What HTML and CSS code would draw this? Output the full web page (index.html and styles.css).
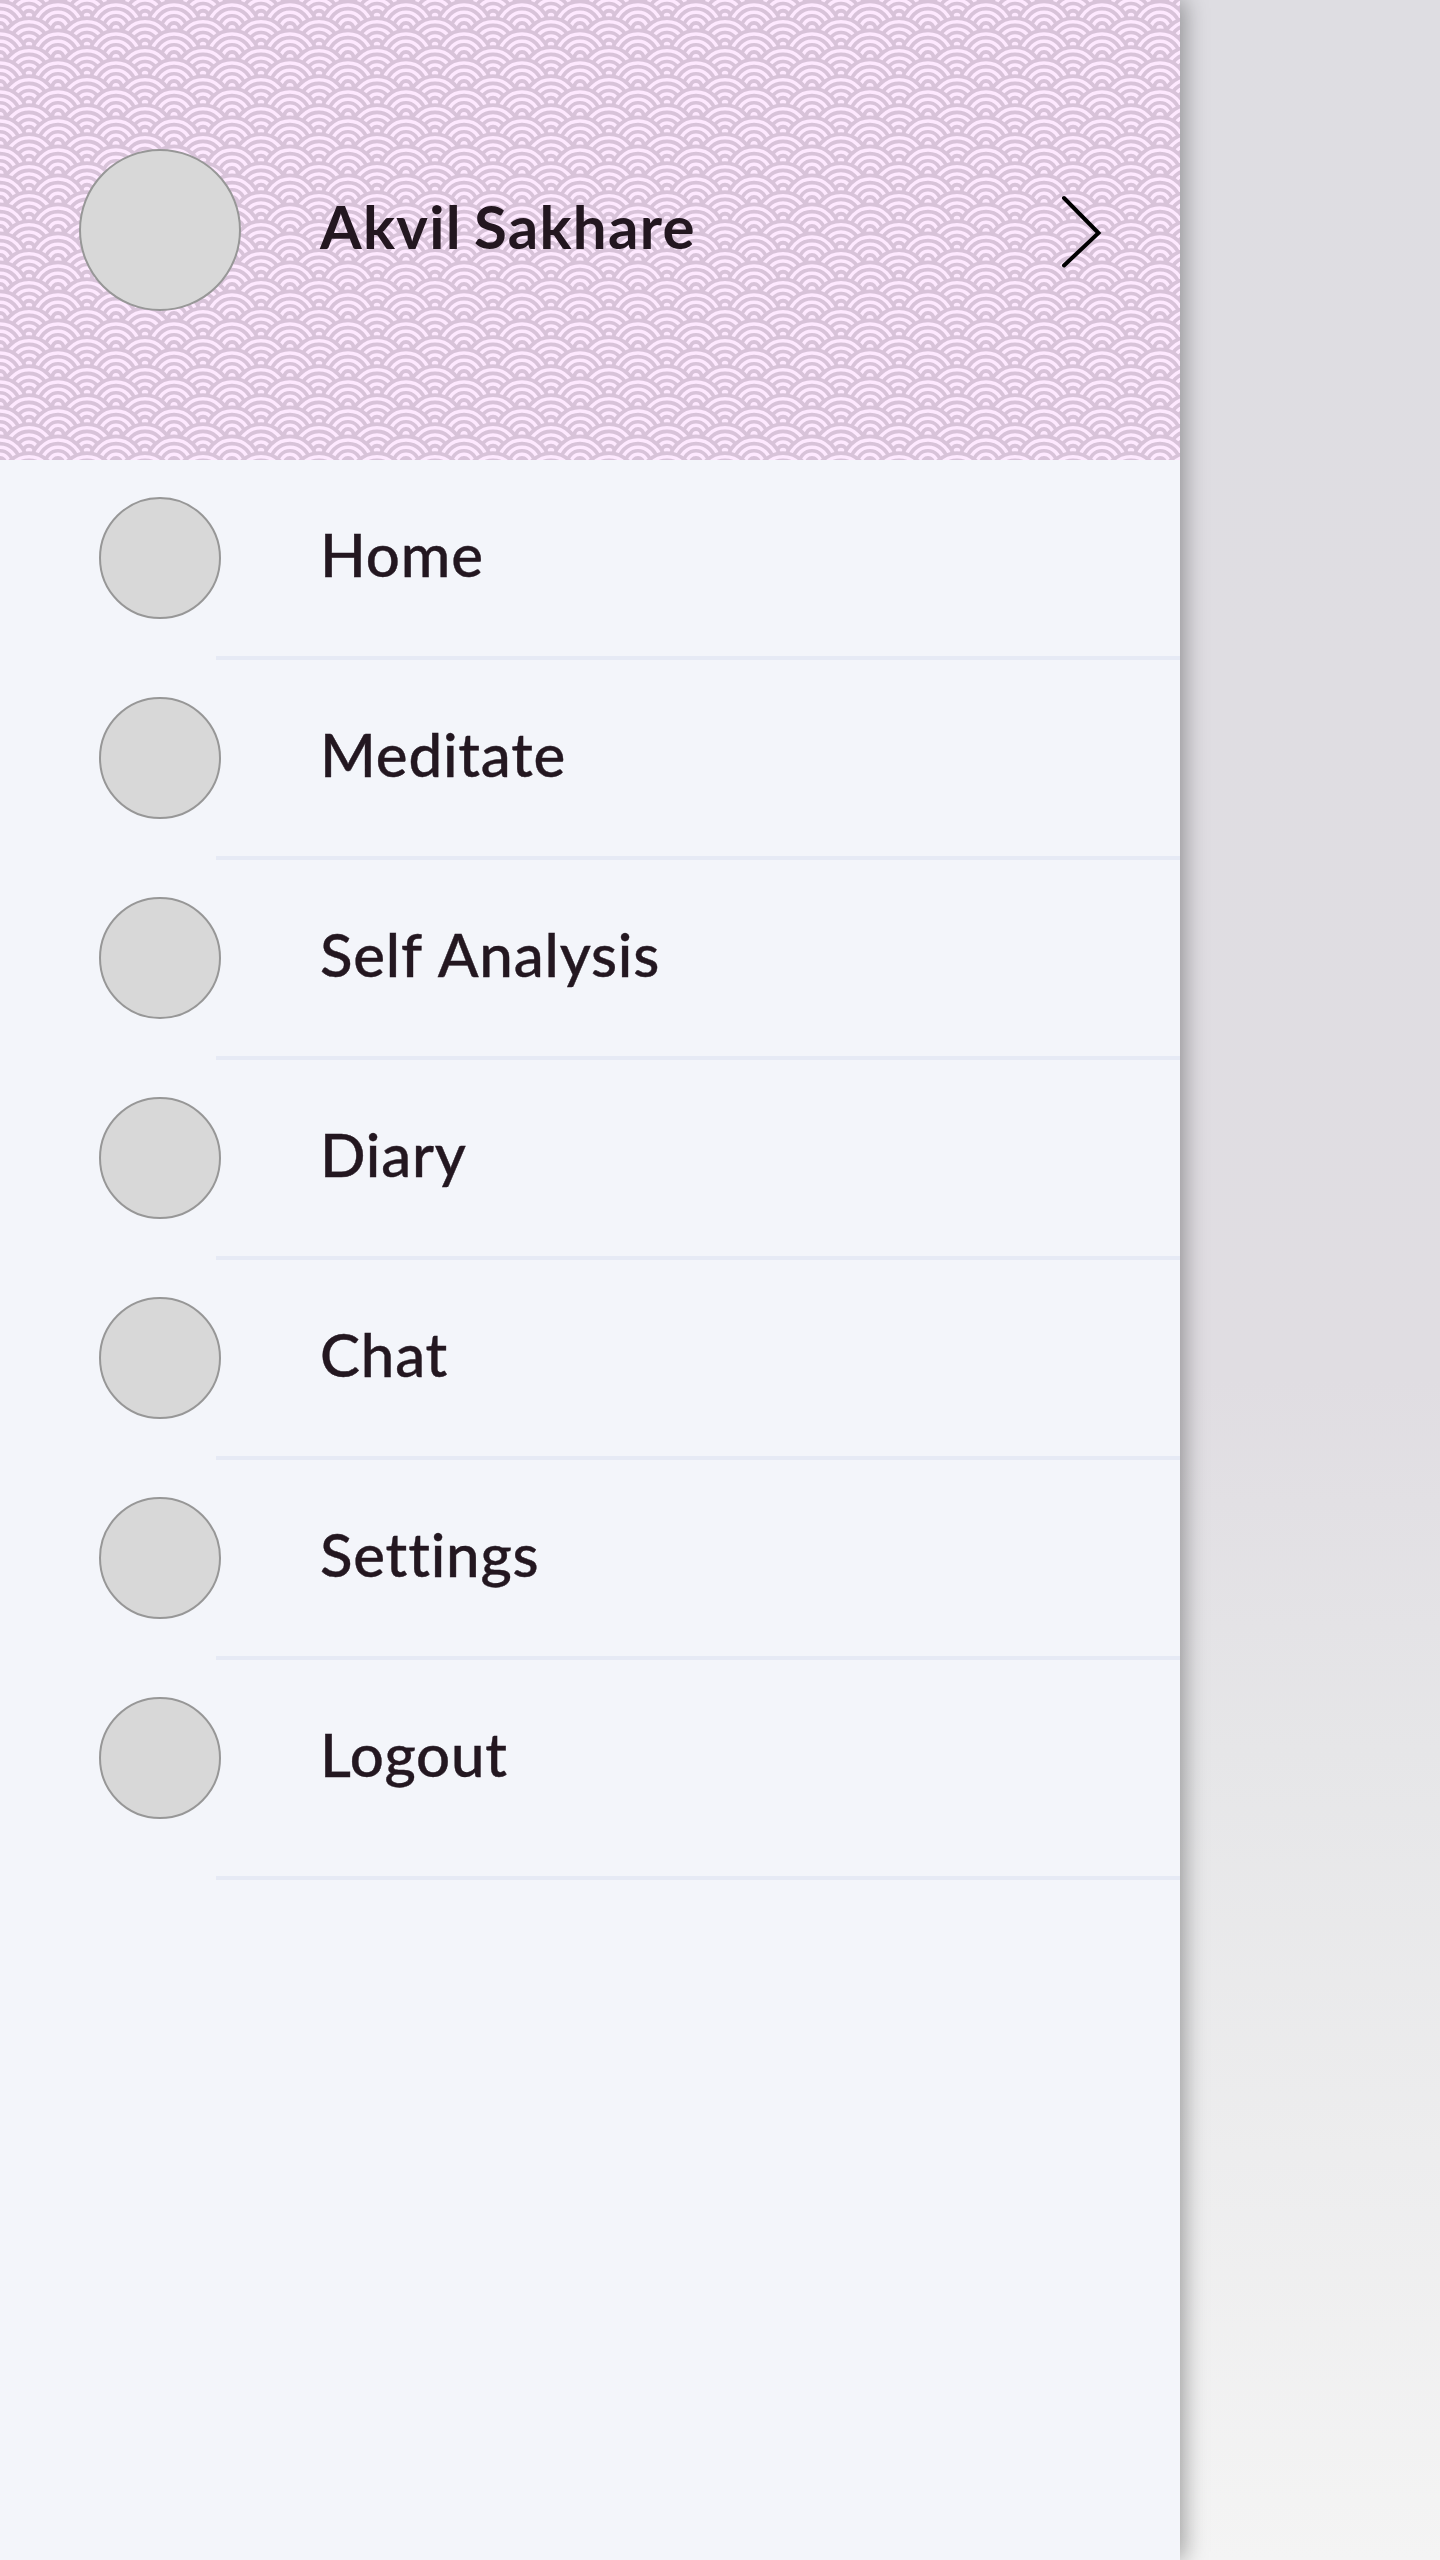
FILE: index.html
```html
<!DOCTYPE html>
<html lang="en">
<head>
<meta charset="utf-8">
<title>Menu</title>
<link rel="stylesheet" href="styles.css">
</head>
<body>
<aside class="drawer">
  <header class="profile">
    <svg class="waves" width="1180" height="460" aria-hidden="true">
      <defs>
        <g id="scale">
          <circle r="29" fill="#d8c3d9"/>
          <g fill="none" stroke="#fee9ff" stroke-width="3.5">
            <circle r="23.500"/><circle r="16.300"/><circle r="9.200"/>
          </g>
          <circle r="3.600" fill="#fee9ff"/>
        </g>
        <pattern id="seigaiha" width="58" height="29" patternUnits="userSpaceOnUse">
          <rect width="58" height="29" fill="#d8c3d9"/>
          <use href="#scale" x="0" y="-0.5"/><use href="#scale" x="58" y="-0.5"/>
          <use href="#scale" x="29" y="16.3"/>
          <use href="#scale" x="0" y="28.5"/><use href="#scale" x="58" y="28.5"/>
          <use href="#scale" x="29" y="45.3"/>
          <use href="#scale" x="0" y="57.5"/><use href="#scale" x="58" y="57.5"/>
        </pattern>
      </defs>
      <rect width="1180" height="460" fill="url(#seigaiha)"/>
    </svg>
    <span class="avatar"></span>
    <span class="label name">Akvil Sakhare</span>
    <svg class="chevron" width="44" height="80" viewBox="0 0 44 80"><path d="M4 8L38.500 43L4 75.500" fill="none" stroke="#000" stroke-width="4" stroke-linecap="round"/></svg>
  </header>
  <nav class="menu">
    <a class="item"><span class="icon"></span><span class="label">Home</span></a>
    <a class="item"><span class="icon"></span><span class="label">Meditate</span></a>
    <a class="item"><span class="icon"></span><span class="label">Self Analysis</span></a>
    <a class="item"><span class="icon"></span><span class="label">Diary</span></a>
    <a class="item"><span class="icon"></span><span class="label">Chat</span></a>
    <a class="item"><span class="icon"></span><span class="label">Settings</span></a>
    <a class="item last"><span class="icon"></span><span class="label">Logout</span></a>
  </nav>
</aside>
</body>
</html>
```
FILE: styles.css
```css
* { box-sizing: border-box; }
body {
  margin: 0;
  height: 2560px;
  overflow: hidden;
  background: linear-gradient(#dedde2 0, #e0dde2 1380px, #e6e6e8 1750px, #f4f4f4 2560px);
  font-family: "Lato", sans-serif;
  color: #231720;
}
.drawer {
  width: 1180px;
  height: 2560px;
  background: #f3f5fa;
  box-shadow: 4px 0 22px rgba(0, 0, 0, 0.36);
}
.profile {
  position: relative;
  display: flex;
  align-items: center;
  height: 460px;
  padding: 0 76px 0 79px;
}
.waves { position: absolute; inset: 0; }
.avatar, .icon {
  flex: none;
  border: 2px solid #979797;
  border-radius: 50%;
  background: #d8d8d8;
}
.avatar { position: relative; width: 162px; height: 162px; }
.icon { width: 122px; height: 122px; }
.label {
  font-size: 60px;
  line-height: 72px;
  font-weight: 500;
  letter-spacing: 0.8px;
  word-spacing: 2px;
  font-variant-ligatures: none;
  -webkit-text-stroke: 0.4px #231720;
  white-space: nowrap;
}
.name {
  position: relative;
  margin: 0 0 8px 79px;
  font-weight: 700;
  letter-spacing: 1.3px;
  word-spacing: -4px;
  -webkit-text-stroke: 0;
}
.chevron { position: relative; margin-left: auto; }
.item {
  display: flex;
  align-items: flex-start;
  height: 200px;
  padding: 37px 0 0 99px;
  background: linear-gradient(#e6eaf5, #e6eaf5) 216px 196px / 964px 4px no-repeat;
}
.item .label { margin: 21px 0 0 99px; }
.item.last { height: 220px; background-position: 216px 216px; }
```
